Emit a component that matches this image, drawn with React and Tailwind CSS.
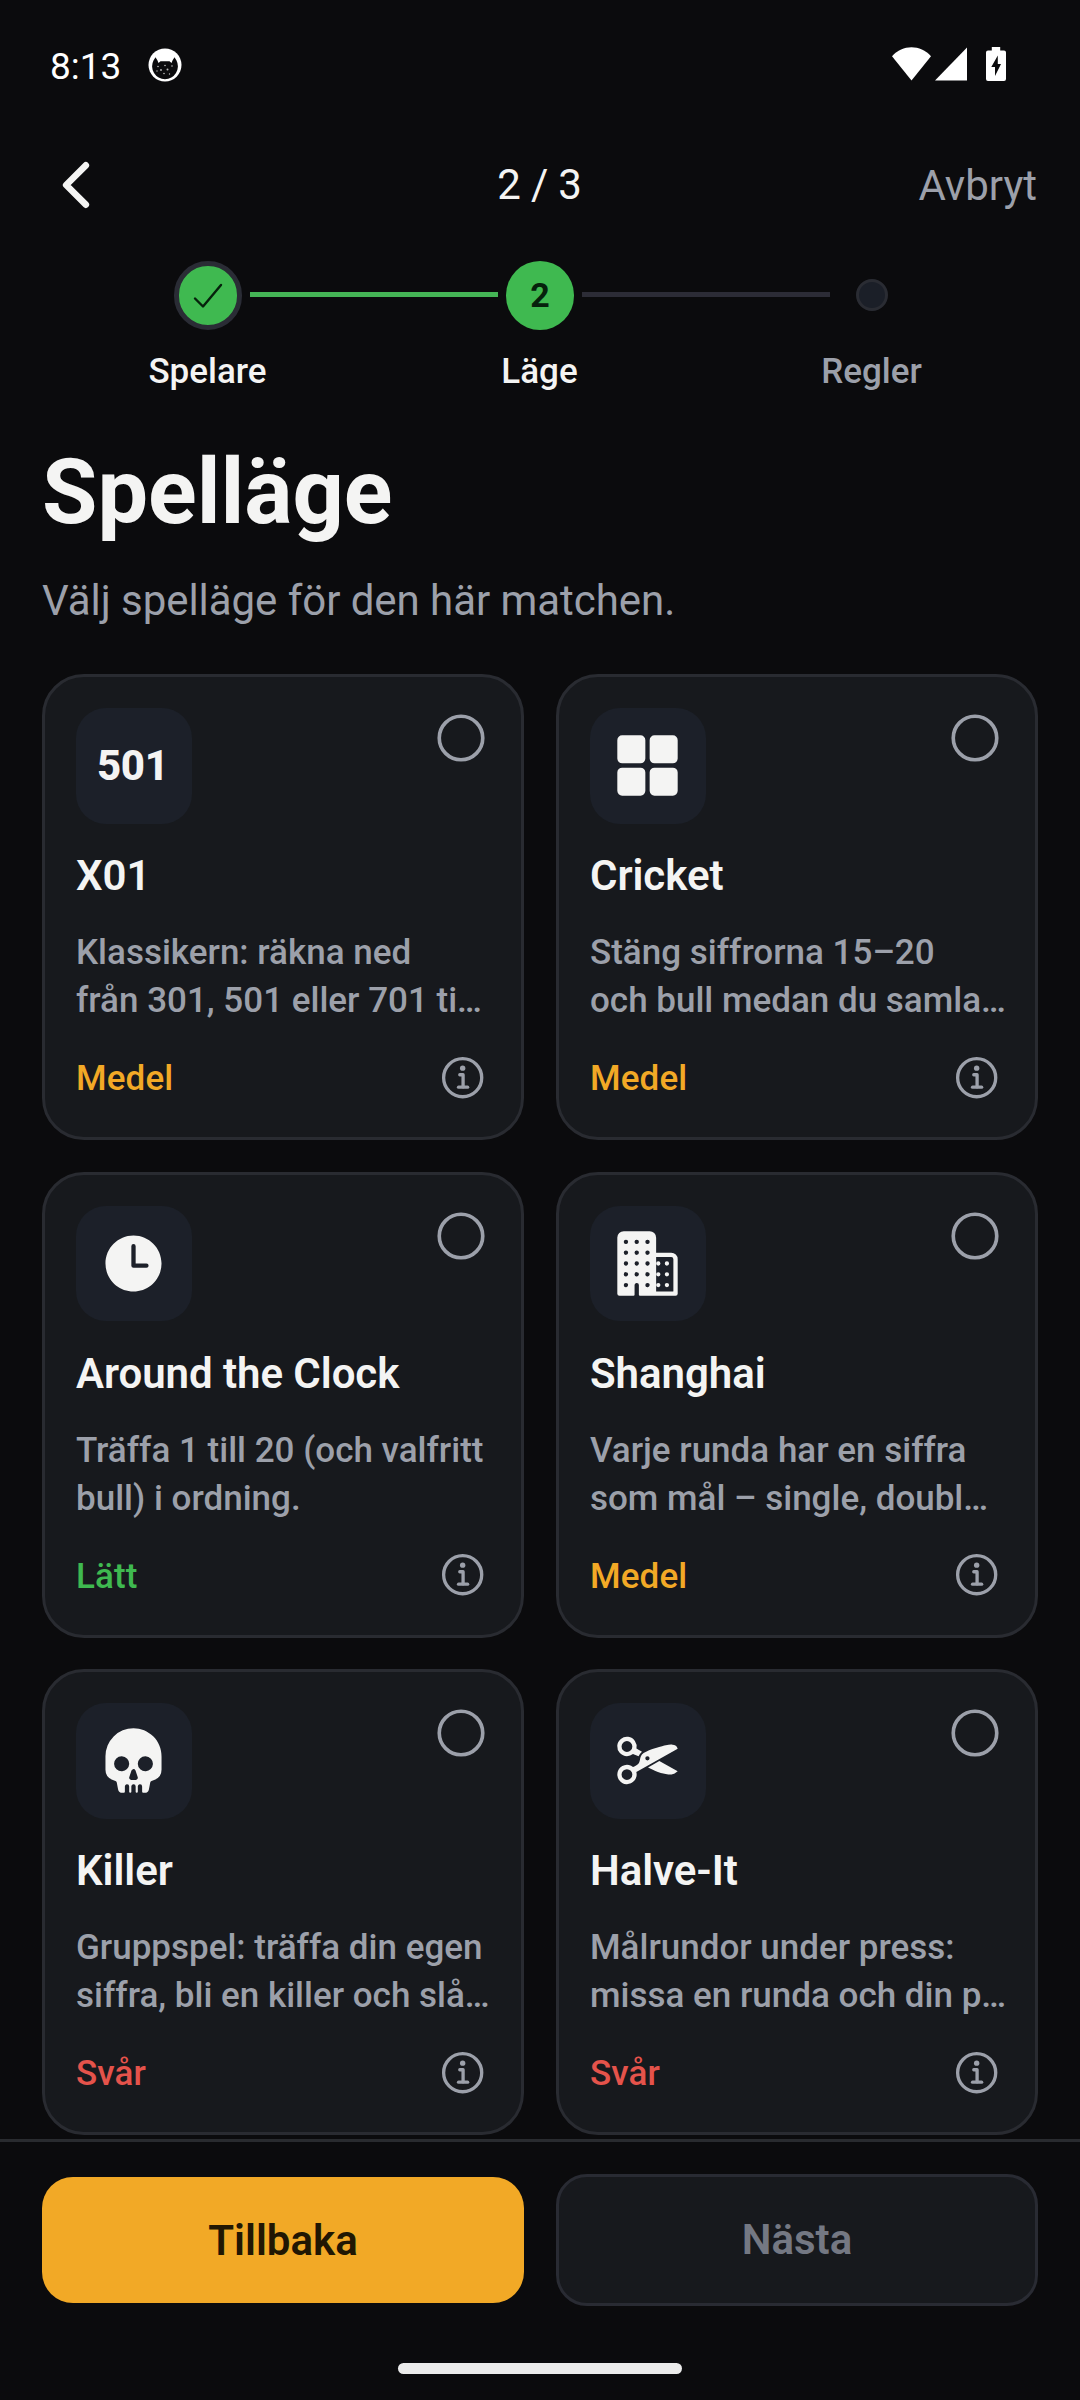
import React, { useState } from "react";
import {
  IoBusiness,
  IoChevronBack,
  IoCut,
  IoEllipseOutline,
  IoGrid,
  IoInformationCircleOutline,
  IoSkull,
  IoTime,
} from "react-icons/io5";

const modes = [
  {
    id: "x01",
    title: "X01",
    lines: ["Klassikern: räkna ned", "från 301, 501 eller 701 ti…"],
    level: "Medel",
  },
  {
    id: "cricket",
    icon: IoGrid,
    title: "Cricket",
    lines: ["Stäng siffrorna 15–20", "och bull medan du samla…"],
    level: "Medel",
  },
  {
    id: "clock",
    icon: IoTime,
    title: "Around the Clock",
    lines: ["Träffa 1 till 20 (och valfritt", "bull) i ordning."],
    level: "Lätt",
  },
  {
    id: "shanghai",
    icon: IoBusiness,
    title: "Shanghai",
    lines: ["Varje runda har en siffra", "som mål – single, doubl…"],
    level: "Medel",
  },
  {
    id: "killer",
    icon: IoSkull,
    title: "Killer",
    lines: ["Gruppspel: träffa din egen", "siffra, bli en killer och slå…"],
    level: "Svår",
  },
  {
    id: "halve-it",
    icon: IoCut,
    title: "Halve-It",
    lines: ["Målrundor under press:", "missa en runda och din p…"],
    level: "Svår",
  },
];

const levelColors = {
  Lätt: "text-[#3fb950]",
  Medel: "text-[#f2a926]",
  Svår: "text-[#e5534b]",
};

const StatusBar = () => (
  <div className="flex h-[128px] shrink-0 items-center pl-[50px] pr-[74px] text-white">
    <span className="pt-[5px] text-[37px] leading-[44px]">8:13</span>

    {/* App notification badge */}
    <svg className="ml-[27px] mt-[2px] h-[34px] w-[34px]" viewBox="0 0 34 34">
      <circle cx="17" cy="17" r="16.5" fill="#fff" />
      <path
        d="M5.500 12.500 7.500 9.200 9.500 12.600 10.500 15 12.500 13.200H21.500L23.500 15 24.500 12.600 26.500 9.200 28.500 12.500A12.900 12.900 0 1 1 5.500 12.500Z"
        fill="#0b0b0d"
      />
      <g fill="#bbb">
        <circle cx="10" cy="18.500" r=".8" />
        <circle cx="17" cy="17.500" r=".8" />
        <circle cx="24" cy="18" r=".8" />
        <circle cx="13" cy="22" r=".9" />
        <circle cx="19.500" cy="21.500" r="1" />
        <circle cx="16" cy="25.500" r=".8" />
        <circle cx="21.500" cy="26" r=".7" />
        <circle cx="9" cy="23" r=".7" />
      </g>
    </svg>

    <div className="ml-auto flex items-center">
      <svg className="h-[34px] w-[39px]" viewBox="0 0 39 34" fill="currentColor">
        <path d="M19.500 33.500 0 9.200C5.500 3.400 12.300.3 19.500.3S33.500 3.400 39 9.200Z" />
      </svg>
      <svg className="ml-[4px] h-[34px] w-[32px]" viewBox="0 0 32 34" fill="currentColor">
        <path d="M32 .6V33.500H0Z" />
      </svg>
      <svg className="ml-[19px] h-[34px] w-[20px]" viewBox="0 0 20 34" fill="currentColor">
        <path
          fillRule="evenodd"
          d="M5.800 0H14.200V3.400H18A2 2 0 0 1 20 5.400V32A2 2 0 0 1 18 34H2A2 2 0 0 1 0 32V5.400A2 2 0 0 1 2 3.400H5.800ZM11.800 8.500 5.300 20H9V29L15 17H11.800Z"
        />
      </svg>
    </div>
  </div>
);

const Header = () => (
  <div className="grid h-[114px] shrink-0 grid-cols-3 items-center px-[42px]">
    <button className="-ml-px w-fit">
      <IoChevronBack className="h-[70px] w-[70px]" />
    </button>
    <span className="mr-px text-center text-[42px] leading-[50px] tracking-[-0.2px]">2 / 3</span>
    <button className="mr-px mt-[2px] text-right text-[42px] leading-[50px] text-[#9ca0aa]">
      Avbryt
    </button>
  </div>
);

const Stepper = () => (
  <div className="mt-[19px] shrink-0">
    <div className="flex h-[69px] items-center justify-center gap-[8px]">
      <div className="flex h-[69px] w-[68px] items-center justify-center rounded-full border-[5px] border-[#2a2c35] bg-[#3fb950]">
        <svg className="h-[26px] w-[30px]" viewBox="0 0 30 26" fill="none">
          <path
            d="M2 15.500 10 23.500 28 2"
            stroke="#06210c"
            strokeWidth="2.400"
            strokeLinecap="round"
            strokeLinejoin="round"
          />
        </svg>
      </div>
      <div className="mb-[2px] h-[5px] w-[248px] bg-[#45b556]" />
      <div className="flex h-[69px] w-[68px] items-center justify-center rounded-full bg-[#3fb950] pb-[2px] text-[34px] font-bold leading-[40px] text-[#06210c]">
        2
      </div>
      <div className="mb-[2px] h-[5px] w-[248px] bg-[#2c2c36]" />
      <div className="mb-[2px] flex w-[68px] justify-center">
        <div className="h-[32px] w-[32px] rounded-full border-[3px] border-[#2a2c33] bg-[#1b1f28]" />
      </div>
    </div>
    <div className="mt-[22px] flex justify-center pr-px text-center text-[35px] font-medium leading-[39px]">
      <span className="w-[332px]">Spelare</span>
      <span className="w-[332px]">Läge</span>
      <span className="w-[332px] text-[#9ca0aa]">Regler</span>
    </div>
  </div>
);

const ModeCard = ({ mode, onSelect }) => {
  const Icon = mode.icon;

  return (
    <div
      onClick={() => onSelect(mode.id)}
      className="flex h-[466px] flex-col rounded-[42px] border-[3px] border-[#292b31] bg-[#17191d] p-[31px]"
    >
      <div className="flex items-start justify-between">
        <div className="flex h-[115.5px] w-[115.5px] items-center justify-center rounded-[30px] bg-[#1c2029]">
          {Icon ? (
            <Icon className="h-[69px] w-[69px]" />
          ) : (
            <span className="pr-[2px] text-[42px] font-extrabold leading-[48px] tracking-[-0.4px]">
              501
            </span>
          )}
        </div>
        <IoEllipseOutline className="mt-[1px] h-[58px] w-[58px] text-[#9ca0aa]" />
      </div>

      <h2 className="mt-[28.5px] text-[42px] font-semibold leading-[48px] tracking-[-0.05px]">
        {mode.title}
      </h2>

      <p className="mt-[29px] whitespace-nowrap text-[35px] font-medium leading-[48px] text-[#9ca0aa]">
        {mode.lines[0]}
        <br />
        {mode.lines[1]}
      </p>

      <div className="mt-[26.5px] flex items-center justify-between">
        <span
          className={`pt-[2px] text-[35px] font-medium leading-[48px] tracking-[0.1px] ${levelColors[mode.level]}`}
        >
          {mode.level}
        </span>
        <IoInformationCircleOutline className="h-[53px] w-[53px] text-[#9ca0aa]" />
      </div>
    </div>
  );
};

const App = () => {
  const [, setSelected] = useState(null);

  return (
    <div className="flex h-[2400px] w-[1080px] flex-col overflow-hidden bg-[#0b0b0d] font-['Roboto',sans-serif] text-[#f4f4f3]">
      <StatusBar />
      <Header />
      <Stepper />

      <div className="min-h-0 flex-1 overflow-hidden px-[42px]">
        <h1 className="mt-[50px] text-[90px] font-bold leading-[104px]">Spelläge</h1>
        <p className="mt-[31px] text-[42px] leading-[50px] tracking-[-0.05px] text-[#9ca0aa]">
          Välj spelläge för den här matchen.
        </p>

        <div className="mt-[48px] grid grid-cols-2 gap-x-[32px] gap-y-[31.5px]">
          {modes.map((mode) => (
            <ModeCard key={mode.id} mode={mode} onSelect={setSelected} />
          ))}
        </div>
      </div>

      {/* Bottom actions */}
      <div className="h-[261px] shrink-0 border-t-[3px] border-[#292b2f]">
        <div className="mt-[32px] grid grid-cols-2 items-center gap-[32px] px-[42px] text-[42px] font-semibold leading-[50px]">
          <button className="h-[126px] rounded-[31px] bg-[#f2a926] pt-[2px] text-[#211703]">
            Tillbaka
          </button>
          <button className="h-[132px] rounded-[31px] border-[3px] border-[#292b33] bg-[#17191d] text-[#747883]">
            Nästa
          </button>
        </div>
        <div className="mx-auto mt-[57px] h-[11px] w-[284px] rounded-full bg-[#ebebeb]" />
      </div>
    </div>
  );
};

export default App;
